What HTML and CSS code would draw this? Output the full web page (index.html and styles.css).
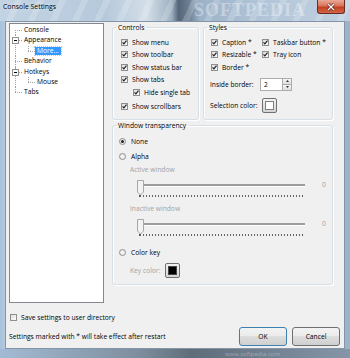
FILE: index.html
```html
<!DOCTYPE html>
<html lang="en">
<head>
    <meta charset="UTF-8">
    <title>Console Settings</title>
    <link rel="stylesheet" href="styles.css">
</head>
<body>
    <div class="window">
        <!-- Title bar -->
        <div class="titlebar">
            <span class="title">Console Settings</span>
            <span class="watermark">SOFTPEDIA</span>
            <span class="close">
                <svg width="10" height="8" viewBox="0 0 10 8"><path d="M2 1 L8 7 M8 1 L2 7" stroke="#5a1a10" stroke-width="2.6"/><path d="M2 1 L8 7 M8 1 L2 7" stroke="#fff" stroke-width="1.4"/></svg>
            </span>
        </div>

        <div class="client">
            <div class="main">
                <!-- Settings tree -->
                <div class="tree">
                    <div class="node"><div class="row"><span class="text">Console</span></div></div>
                    <div class="node">
                        <div class="row"><span class="exp"></span><span class="text">Appearance</span></div>
                        <div class="children">
                            <div class="node"><div class="row"><span class="text selected">More...</span></div></div>
                        </div>
                    </div>
                    <div class="node"><div class="row"><span class="text">Behavior</span></div></div>
                    <div class="node">
                        <div class="row"><span class="exp"></span><span class="text">Hotkeys</span></div>
                        <div class="children">
                            <div class="node"><div class="row"><span class="text">Mouse</span></div></div>
                        </div>
                    </div>
                    <div class="node"><div class="row"><span class="text">Tabs</span></div></div>
                </div>

                <div class="panels">
                    <div class="top-groups">
                        <fieldset class="group controls">
                            <legend>Controls</legend>
                            <div class="group-body">
                                <div class="check-row"><span class="cb"><svg width="5" height="5" viewBox="0 0 5 5"><path d="M0.5 2.3 L1.9 3.9 L4.5 0.6" fill="none" stroke="#222" stroke-width="1.2"/></svg></span>Show menu</div>
                                <div class="check-row"><span class="cb"><svg width="5" height="5" viewBox="0 0 5 5"><path d="M0.5 2.3 L1.9 3.9 L4.5 0.6" fill="none" stroke="#222" stroke-width="1.2"/></svg></span>Show toolbar</div>
                                <div class="check-row"><span class="cb"><svg width="5" height="5" viewBox="0 0 5 5"><path d="M0.5 2.3 L1.9 3.9 L4.5 0.6" fill="none" stroke="#222" stroke-width="1.2"/></svg></span>Show status bar</div>
                                <div class="check-row"><span class="cb"><svg width="5" height="5" viewBox="0 0 5 5"><path d="M0.5 2.3 L1.9 3.9 L4.5 0.6" fill="none" stroke="#222" stroke-width="1.2"/></svg></span>Show tabs</div>
                                <div class="check-row indent"><span class="cb"><svg width="5" height="5" viewBox="0 0 5 5"><path d="M0.5 2.3 L1.9 3.9 L4.5 0.6" fill="none" stroke="#222" stroke-width="1.2"/></svg></span>Hide single tab</div>
                                <div class="check-row spaced"><span class="cb"><svg width="5" height="5" viewBox="0 0 5 5"><path d="M0.5 2.3 L1.9 3.9 L4.5 0.6" fill="none" stroke="#222" stroke-width="1.2"/></svg></span>Show scrollbars</div>
                            </div>
                        </fieldset>

                        <fieldset class="group styles">
                            <legend>Styles</legend>
                            <div class="group-body">
                                <div class="style-grid">
                                    <div class="check-row"><span class="cb"><svg width="5" height="5" viewBox="0 0 5 5"><path d="M0.5 2.3 L1.9 3.9 L4.5 0.6" fill="none" stroke="#222" stroke-width="1.2"/></svg></span>Caption *</div>
                                    <div class="check-row"><span class="cb"><svg width="5" height="5" viewBox="0 0 5 5"><path d="M0.5 2.3 L1.9 3.9 L4.5 0.6" fill="none" stroke="#222" stroke-width="1.2"/></svg></span>Taskbar button *</div>
                                    <div class="check-row"><span class="cb"><svg width="5" height="5" viewBox="0 0 5 5"><path d="M0.5 2.3 L1.9 3.9 L4.5 0.6" fill="none" stroke="#222" stroke-width="1.2"/></svg></span>Resizable *</div>
                                    <div class="check-row"><span class="cb"><svg width="5" height="5" viewBox="0 0 5 5"><path d="M0.5 2.3 L1.9 3.9 L4.5 0.6" fill="none" stroke="#222" stroke-width="1.2"/></svg></span>Tray icon</div>
                                    <div class="check-row"><span class="cb"><svg width="5" height="5" viewBox="0 0 5 5"><path d="M0.5 2.3 L1.9 3.9 L4.5 0.6" fill="none" stroke="#222" stroke-width="1.2"/></svg></span>Border *</div>
                                </div>
                                <div class="field-row border-row">
                                    <span class="field-label">Inside border:</span>
                                    <div class="spin">
                                        <span class="spin-edit">2</span>
                                        <span class="spin-btns">
                                            <span class="spin-btn"><svg width="3" height="2" viewBox="0 0 3 2"><path d="M0 2 L1.5 0 L3 2Z" fill="#333"/></svg></span>
                                            <span class="spin-btn"><svg width="3" height="2" viewBox="0 0 3 2"><path d="M0 0 L1.5 2 L3 0Z" fill="#333"/></svg></span>
                                        </span>
                                    </div>
                                </div>
                                <div class="field-row color-row">
                                    <span class="field-label wide">Selection color:</span>
                                    <span class="swatch-btn"><span class="swatch white"></span></span>
                                </div>
                            </div>
                        </fieldset>
                    </div>

                    <fieldset class="group transparency">
                        <legend>Window transparency</legend>
                        <div class="group-body">
                            <div class="radio-row first"><span class="rb on"></span>None</div>
                            <div class="radio-row alpha"><span class="rb"></span>Alpha</div>
                            <div class="sub-label">Active window</div>
                            <div class="slider-row">
                                <div class="slider">
                                    <div class="track"></div>
                                    <svg class="thumb" width="7" height="16" viewBox="0 0 7 16"><path d="M0.5 0.5 H6.5 V12 L3.5 15 L0.5 12 Z" fill="#f2f2f2" stroke="#a7a7a7"/></svg>
                                    <div class="ticks"></div>
                                </div>
                                <span class="value">0</span>
                            </div>
                            <div class="sub-label second">Inactive window</div>
                            <div class="slider-row">
                                <div class="slider">
                                    <div class="track"></div>
                                    <svg class="thumb" width="7" height="16" viewBox="0 0 7 16"><path d="M0.5 0.5 H6.5 V12 L3.5 15 L0.5 12 Z" fill="#f2f2f2" stroke="#a7a7a7"/></svg>
                                    <div class="ticks"></div>
                                </div>
                                <span class="value">0</span>
                            </div>
                            <div class="radio-row colorkey"><span class="rb"></span>Color key</div>
                            <div class="key-row">
                                <span class="sub-label key-label">Key color:</span>
                                <span class="swatch-btn"><span class="swatch black"></span></span>
                            </div>
                        </div>
                    </fieldset>
                </div>
            </div>

            <div class="footer">
                <div class="check-row save-row"><span class="cb"></span>Save settings to user directory</div>
                <div class="footer-row">
                    <span class="note">Settings marked with * will take effect after restart</span>
                    <div class="buttons">
                        <button class="btn default">OK</button>
                        <button class="btn">Cancel</button>
                    </div>
                </div>
            </div>
        </div>
        <div class="bottom-frame"><span class="site">www.softpedia.com</span></div>
    </div>
</body>
</html>
```

FILE: styles.css
```css
body {
    margin: 0;
    width: 350px;
    height: 358px;
    overflow: hidden;
    font-family: "Open Sans", "Liberation Sans", sans-serif;
    font-size: 6.7px;
    color: #000;
}
.window {
    width: 350px;
    height: 358px;
    display: flex;
    flex-direction: column;
    background: linear-gradient(90deg, #a9c3dd 0, #bdd0e2 3%, #b3c5d8 60%, #9eb3c8 100%);
}
.titlebar {
    height: 21px;
    display: flex;
    align-items: flex-start;
    background:
        repeating-linear-gradient(115deg, rgba(255,255,255,0) 0 14px, rgba(255,255,255,0.18) 14px 20px),
        linear-gradient(90deg, #c2d3e3 0, #b6c9db 30%, #d3dee8 42%, #9fb0c1 49%, #56667a 51%, #6c7e92 54%, #9cb2c8 57%, #b2c5d8 75%, #c0d0e0 100%);
}
.title {
    padding-left: 3px;
    line-height: 14px;
    font-size: 6.9px;
    text-shadow: 0 0 5px rgba(255, 255, 255, 0.9);
}
.watermark {
    margin-left: auto;
    margin-right: 7px;
    width: 120px;
    text-align: center;
    font-family: "Liberation Serif", serif;
    font-weight: bold;
    font-size: 18px;
    line-height: 21px;
    letter-spacing: 1px;
    color: rgba(255, 255, 255, 0.35);
}
.close {
    width: 28px;
    height: 14px;
    margin-right: 5px;
    box-sizing: border-box;
    border: 1px solid #6b2c22;
    border-top: none;
    border-radius: 0 0 3px 3px;
    background: linear-gradient(#e9a996 0, #d9735b 45%, #c4401f 55%, #d0664a 100%);
    display: flex;
    align-items: center;
    justify-content: center;
}
.client {
    margin: 0 5px;
    height: 329px;
    box-sizing: border-box;
    border: 1px solid #8295a9;
    background: #f0f0f0;
    display: flex;
    flex-direction: column;
}
.main {
    display: flex;
    gap: 8px;
    padding: 1px 0 0 3px;
}

/* tree */
.tree {
    width: 95px;
    height: 280px;
    box-sizing: border-box;
    border: 1px solid #828790;
    background: #fff;
    padding-top: 1px;
}
.node {
    position: relative;
}
.node::after {
    content: '';
    position: absolute;
    left: 5px;
    top: 0;
    bottom: 0;
    border-left: 1px dotted #a0a0a0;
}
.node:last-child::after {
    bottom: auto;
    height: 5px;
}
.tree > .node:first-child::after {
    top: 5px;
    bottom: 0;
    height: auto;
}
.row {
    position: relative;
    height: 10.4px;
    line-height: 10.4px;
    padding-left: 14px;
    white-space: nowrap;
}
.row::before {
    content: '';
    position: absolute;
    left: 5px;
    top: 5px;
    width: 7px;
    border-top: 1px dotted #a0a0a0;
}
.text {
    display: inline-block;
    padding: 0 2px;
    margin-left: -2px;
    line-height: 8.4px;
}
.text.selected {
    background: #3399ff;
    color: #fff;
    outline: 1px dotted #a8cff5;
}
.exp {
    position: absolute;
    left: 2px;
    top: 2px;
    width: 7px;
    height: 7px;
    box-sizing: border-box;
    border: 1px solid #919191;
    background: #fff;
    z-index: 1;
    display: flex;
    align-items: center;
    justify-content: center;
}
.exp::after {
    content: '';
    width: 3px;
    height: 1px;
    background: #000;
}
.children {
    margin-left: 13px;
}

/* group boxes */
.panels {
    width: 221px;
    display: flex;
    flex-direction: column;
}
.top-groups {
    display: flex;
    gap: 4px;
}
.group {
    margin: 0;
    padding: 0;
    min-width: 0;
    box-sizing: border-box;
    border: 1px solid #d5dfe5;
    border-radius: 3px;
    box-shadow: inset 1px 1px 0 #fff, 1px 1px 0 #fff;
}
.group legend {
    margin-left: 3px;
    padding: 0 2px;
    line-height: 9px;
}
.controls {
    width: 87px;
    height: 97px;
}
.styles {
    width: 130px;
    height: 97px;
}
.controls .group-body {
    padding: 4px 0 0 8px;
}
.styles .group-body {
    padding: 4px 0 0 7px;
}
.check-row {
    display: flex;
    align-items: center;
    gap: 4px;
    height: 12.5px;
    white-space: nowrap;
}
.check-row.indent {
    margin-left: 12px;
}
.check-row.spaced {
    margin-top: 1.5px;
}
.cb {
    width: 7px;
    height: 7px;
    flex: none;
    box-sizing: border-box;
    border: 1px solid #8e8f8f;
    background: linear-gradient(135deg, #dcdcdc, #fdfdfd);
    display: flex;
    align-items: center;
    justify-content: center;
}
.style-grid {
    display: grid;
    grid-template-columns: 51px auto;
}
.field-row {
    display: flex;
    align-items: center;
    margin-left: -1px;
}
.border-row {
    margin-top: 4px;
    height: 13px;
}
.color-row {
    margin-top: 7.5px;
    height: 15px;
}
.field-label {
    width: 50px;
}
.field-label.wide {
    width: 52px;
}
.spin {
    display: flex;
    width: 32px;
    height: 13px;
}
.spin-edit {
    flex: 1;
    box-sizing: border-box;
    border: 1px solid #abadb3;
    border-right: none;
    background: #fff;
    padding-left: 3px;
    line-height: 11px;
}
.spin-btns {
    width: 10px;
    display: flex;
    flex-direction: column;
}
.spin-btn {
    flex: 1;
    box-sizing: border-box;
    border: 1px solid #acacac;
    background: linear-gradient(#f4f4f4, #dedede);
    display: flex;
    align-items: center;
    justify-content: center;
}
.spin-btn + .spin-btn {
    border-top: none;
}
.swatch-btn {
    width: 15px;
    height: 15px;
    box-sizing: border-box;
    border: 1px solid #707070;
    border-radius: 2px;
    background: linear-gradient(#f2f2f2, #d4d4d4);
    display: flex;
    align-items: center;
    justify-content: center;
}
.swatch {
    width: 9px;
    height: 9px;
    box-sizing: border-box;
    border: 1px solid #808080;
}
.swatch.white {
    background: #fff;
}
.swatch.black {
    background: #000;
    border-color: #444;
}

/* window transparency */
.transparency {
    margin-top: 1px;
    height: 164px;
}
.transparency .group-body {
    padding: 5px 0 0 6px;
}
.radio-row {
    display: flex;
    align-items: center;
    gap: 5px;
    height: 12px;
}
.radio-row.alpha {
    margin-top: 3px;
}
.radio-row.colorkey {
    margin-top: 9px;
}
.rb {
    width: 7px;
    height: 7px;
    box-sizing: border-box;
    border: 1px solid #8e8f8f;
    border-radius: 50%;
    background: radial-gradient(#fff, #dcdcdc);
    display: flex;
    align-items: center;
    justify-content: center;
}
.rb.on::after {
    content: '';
    width: 3px;
    height: 3px;
    border-radius: 50%;
    background: #222;
}
.sub-label {
    margin: 3px 0 0 11px;
    line-height: 10px;
    color: #a3a3a3;
}
.sub-label.second {
    margin-top: 6px;
}
.slider-row {
    display: flex;
    align-items: flex-start;
    margin: 3px 0 0 18px;
}
.slider {
    position: relative;
    width: 168px;
    height: 20px;
}
.track {
    margin: 6px 0 0 3px;
    height: 2px;
    background: #9c9c9c;
    border-bottom: 1px solid #fff;
}
.thumb {
    position: absolute;
    left: 0;
    top: 2px;
}
.ticks {
    margin: 8px 0 0 2px;
    width: 164px;
    height: 2px;
    box-sizing: border-box;
    border-left: 1px solid #555;
    border-right: 1px solid #555;
    background: repeating-linear-gradient(90deg, #666 0 1px, transparent 1px 3px);
}
.value {
    margin: 3px 0 0 17px;
    line-height: 8px;
    color: #a3a3a3;
}
.key-row {
    display: flex;
    align-items: center;
    margin-top: 5px;
}
.sub-label.key-label {
    margin: 0 0 0 11px;
    width: 35px;
}

/* footer */
.footer {
    padding: 0 4px 0 4px;
}
.save-row {
    margin-top: 8px;
    height: 12px;
}
.footer-row {
    display: flex;
    align-items: center;
    margin-top: 4px;
    height: 19px;
}
.note {
    margin-left: -1px;
}
.buttons {
    margin-left: auto;
    display: flex;
    gap: 5px;
}
.btn {
    width: 48px;
    height: 19px;
    padding: 0;
    font-family: inherit;
    font-size: 6.7px;
    color: #000;
    border: 1px solid #707070;
    border-radius: 3px;
    background: linear-gradient(#f2f2f2 0, #ebebeb 50%, #dddddd 50%, #cfcfcf 100%);
}
.btn.default {
    border-color: #3c7fb1;
}
.bottom-frame {
    flex: 1;
    background: linear-gradient(90deg, #a2bbd4 0, #7e8d9c 40%, #5f6d7a 55%, #8696a8 100%);
    text-align: right;
    padding-right: 70px;
}
.site {
    font-size: 6px;
    line-height: 8px;
    color: rgba(255, 255, 255, 0.35);
}
```
